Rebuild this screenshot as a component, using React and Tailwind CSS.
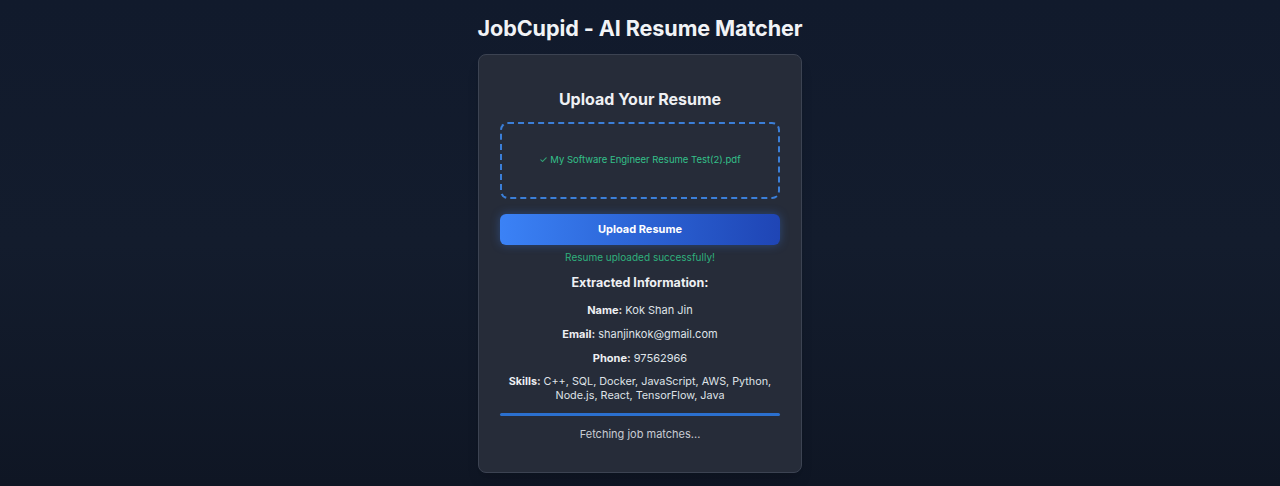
import React from "react";

const info = [
  { label: "Name:", value: "Kok Shan Jin" },
  { label: "Email:", value: "shanjinkok@gmail.com" },
  { label: "Phone:", value: "97562966" },
];

export default function App() {
  return (
    <div
      className="min-h-[486px] w-full bg-gradient-to-b from-[#111a2c] via-[#131c2d] to-[#0f1624] flex flex-col items-center text-white"
      style={{ fontFamily: "Inter, 'Noto Sans', sans-serif" }}
    >
      <h1 className="mt-[15px] text-[21.6px] leading-[26px] font-bold text-[#f1f3f6] tracking-[-0.1px]">
        JobCupid - AI Resume Matcher
      </h1>

      <div className="mt-[13px] w-[324px] h-[419px] rounded-[8px] border border-[#3c4352] bg-[#262c39] px-[21px] pt-[34px] flex flex-col items-center shadow-lg">
        <h2 className="text-[16px] leading-[20px] font-bold text-[#eef0f3]">Upload Your Resume</h2>

        <div className="mt-[13px] w-full h-[77px] rounded-[8px] border-2 border-dashed border-[#3b7fd8] flex items-center justify-center">
          <span className="text-[9.5px] text-[#34c08a] pb-[1px]">✓ My Software Engineer Resume Test(2).pdf</span>
        </div>

        <button className="mt-[15px] w-full h-[31px] rounded-[6px] bg-gradient-to-r from-[#3b82f6] to-[#1f45b5] text-[11px] font-bold text-white shadow-[0_0_10px_rgba(59,130,246,0.35)]">
          Upload Resume
        </button>

        <p className="mt-[6px] text-[10px] leading-[12px] text-[#2fb07d]">Resume uploaded successfully!</p>

        <h3 className="mt-[12px] text-[12.5px] leading-[16px] font-bold text-[#eef0f3]">Extracted Information:</h3>

        <div className="mt-[12px] flex flex-col items-center gap-[10px] text-[11px] leading-[14px] text-[#dfe2e7]">
          {info.map((row) => (
            <p key={row.label}>
              <span className="font-bold text-[#eef0f3]">{row.label}</span> {row.value}
            </p>
          ))}
          <p className="text-center w-[280px] text-[10.8px]">
            <span className="font-bold text-[#eef0f3]">Skills:</span> C++, SQL, Docker, JavaScript, AWS, Python,
            <br />
            Node.js, React, TensorFlow, Java
          </p>
        </div>

        <div className="mt-[10px] w-full h-[3px] rounded-full bg-[#2b70cf]" />

        <p className="mt-[11px] text-[11px] leading-[14px] text-[#c9cdd4]">Fetching job matches...</p>
      </div>
    </div>
  );
}
